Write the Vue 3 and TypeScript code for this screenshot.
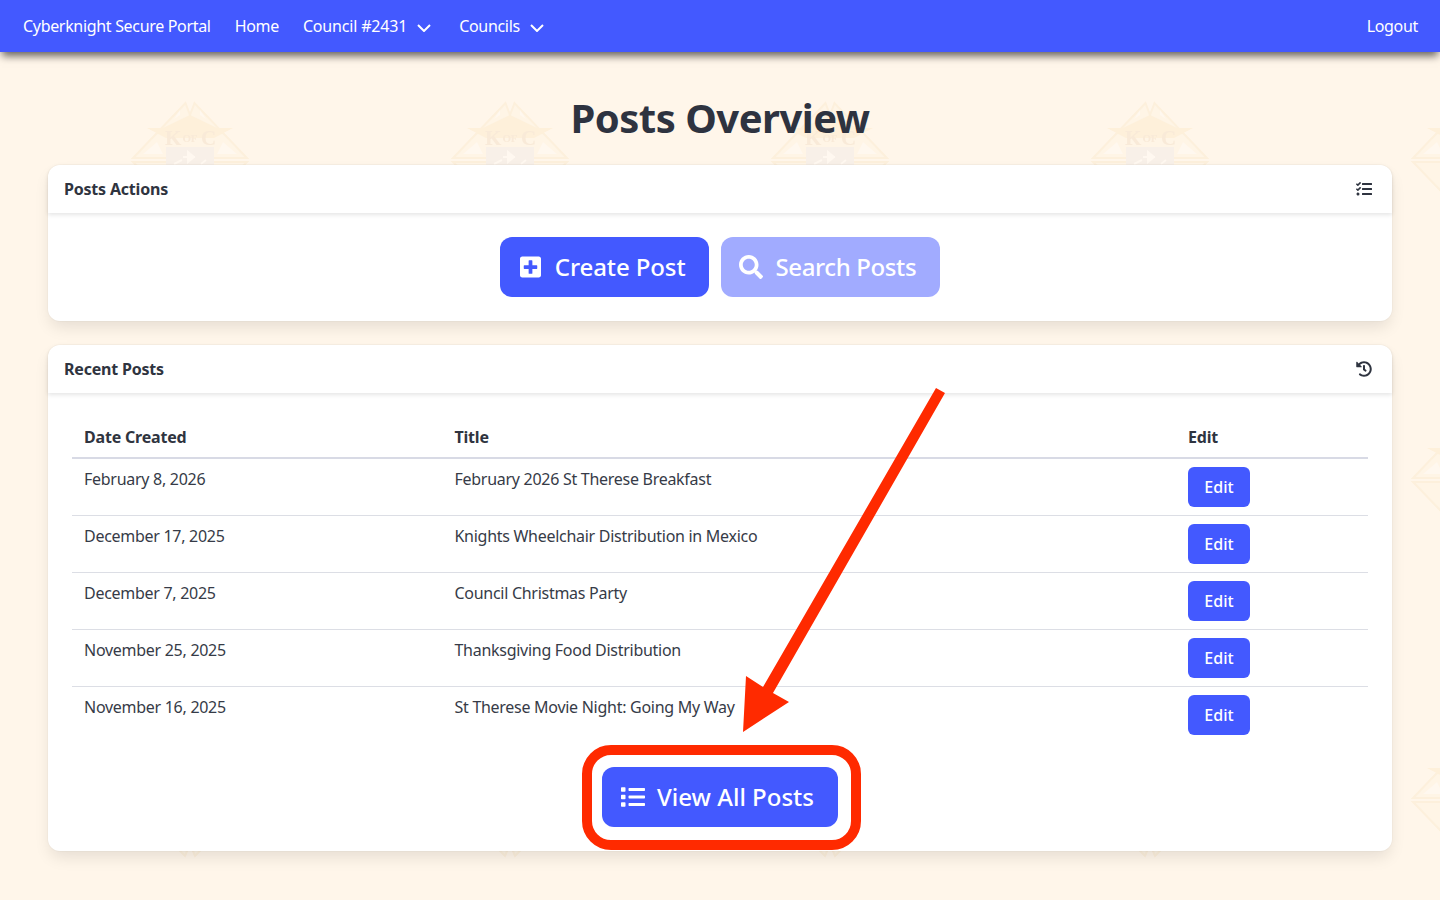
<template>
  <div class="page">
    <svg class="watermark" width="100%" height="100%" aria-hidden="true">
      <defs>
        <pattern id="kofc" x="30" y="92" width="320" height="320" patternUnits="userSpaceOnUse">
          <g transform="translate(160 10)">
            <path class="line" d="M-4.5 1 L-57 56 H57 L4.5 1 L0 13 Z" />
            <path class="line" d="M-57 60 L-5 114 L0 102 L5 114 L57 60 Z" />
            <path class="gold" d="M-43 26 H43 L24 36 H-24 Z" />
            <path class="gold" d="M0 13 L-27 26 H27 Z" />
            <path class="cut" d="M-16 17 L-10 8 V13 Z M16 17 L10 8 V13 Z" />
            <path class="cut" d="M-47 52 L-33 40 L-27 52 Z M47 52 L33 40 L27 52 Z" />
            <rect class="shield" x="-24" y="45" width="48" height="48" />
            <text class="big" x="-25" y="43">K</text>
            <text class="small" x="-7.5" y="40">OF</text>
            <text class="big" x="11" y="43">C</text>
            <path class="blade" d="M-2 50 V60 L4 55 Z M-16 62 L-8 58 M-7 55 H5 M11 62 L16 58" />
          </g>
        </pattern>
      </defs>
      <rect width="100%" height="100%" fill="url(#kofc)" />
    </svg>

    <nav class="navbar">
      <a class="nav-item">Cyberknight Secure Portal</a>
      <a class="nav-item">Home</a>
      <a class="nav-item dropdown council">
        Council #2431
        <svg class="chevron" viewBox="0 0 14 8"><path d="M1 1 L7 7 L13 1" /></svg>
      </a>
      <a class="nav-item dropdown">
        Councils
        <svg class="chevron" viewBox="0 0 14 8"><path d="M1 1 L7 7 L13 1" /></svg>
      </a>
      <a class="nav-item logout">Logout</a>
    </nav>

    <main class="content">
      <h1 class="title">Posts Overview</h1>

      <section class="card">
        <header class="card-header">
          <span>Posts Actions</span>
          <svg class="header-icon" viewBox="0 0 512 512">
            <path d="M139.61 35.5a12 12 0 0 0-17 0L58.93 98.81l-22.7-22.12a12 12 0 0 0-17 0L3.53 92.41a12 12 0 0 0 0 17l47.59 47.4a12.78 12.78 0 0 0 17.61 0l15.59-15.62L156.52 69a12.09 12.09 0 0 0 .09-17zm0 159.19a12 12 0 0 0-17 0l-63.68 63.72-22.7-22.1a12 12 0 0 0-17 0L3.53 252a12 12 0 0 0 0 17L51 316.5a12.77 12.77 0 0 0 17.6 0l15.7-15.69 72.2-72.22a12 12 0 0 0 .09-16.9zM64 368c-26.49 0-48.59 21.5-48.59 48S37.53 464 64 464a48 48 0 0 0 0-96zm432 16H208a16 16 0 0 0-16 16v32a16 16 0 0 0 16 16h288a16 16 0 0 0 16-16v-32a16 16 0 0 0-16-16zm0-320H208a16 16 0 0 0-16 16v32a16 16 0 0 0 16 16h288a16 16 0 0 0 16-16V80a16 16 0 0 0-16-16zm0 160H208a16 16 0 0 0-16 16v32a16 16 0 0 0 16 16h288a16 16 0 0 0 16-16v-32a16 16 0 0 0-16-16z" />
          </svg>
        </header>
        <div class="card-body actions">
          <button class="big-btn create">
            <span class="btn-icon">
              <svg width="21" height="24" viewBox="0 0 448 512">
                <path d="M400 32H48C21.5 32 0 53.5 0 80v352c0 26.5 21.5 48 48 48h352c26.5 0 48-21.5 48-48V80c0-26.5-21.5-48-48-48zm-32 252c0 6.6-5.4 12-12 12h-92v92c0 6.6-5.4 12-12 12h-56c-6.6 0-12-5.4-12-12v-92H92c-6.6 0-12-5.4-12-12v-56c0-6.6 5.4-12 12-12h92v-92c0-6.6 5.4-12 12-12h56c6.6 0 12 5.4 12 12v92h92c6.6 0 12 5.4 12 12v56z" />
              </svg>
            </span>
            Create Post
          </button>
          <button class="big-btn search">
            <span class="btn-icon">
              <svg width="24" height="24" viewBox="0 0 512 512">
                <path d="M505 442.7L405.3 343c-4.5-4.5-10.6-7-17-7H372c27.6-35.3 44-79.7 44-128C416 93.1 322.9 0 208 0S0 93.1 0 208s93.1 208 208 208c48.3 0 92.7-16.4 128-44v16.3c0 6.4 2.5 12.5 7 17l99.7 99.7c9.4 9.4 24.6 9.4 33.9 0l28.3-28.3c9.4-9.4 9.4-24.6.1-34zM208 336c-70.7 0-128-57.2-128-128 0-70.7 57.2-128 128-128 70.7 0 128 57.2 128 128 0 70.7-57.2 128-128 128z" />
              </svg>
            </span>
            Search Posts
          </button>
        </div>
      </section>

      <section class="card">
        <header class="card-header">
          <span>Recent Posts</span>
          <svg class="header-icon" viewBox="0 0 512 512">
            <path d="M504 255.531c.253 136.64-111.18 248.372-247.82 248.468-59.015.042-113.223-20.53-155.822-54.911-11.077-8.94-11.905-25.541-1.839-35.607l11.267-11.267c8.609-8.609 22.353-9.551 31.891-1.984C173.062 425.135 212.781 440 256 440c101.705 0 184-82.311 184-184 0-101.705-82.311-184-184-184-48.814 0-93.149 18.969-126.068 49.932l50.754 50.754c10.08 10.08 2.941 27.314-11.313 27.314H24c-8.837 0-16-7.163-16-16V38.627c0-14.254 17.234-21.393 27.314-11.314l49.372 49.372C129.209 34.136 189.552 8 256 8c136.81 0 247.747 110.78 248 247.531zm-180.912 78.784l9.823-12.63c8.138-10.463 6.253-25.542-4.21-33.679L288 256.349V152c0-13.255-10.745-24-24-24h-16c-13.255 0-24 10.745-24 24v135.651l65.409 50.874c10.463 8.137 25.541 6.253 33.679-4.21z" />
          </svg>
        </header>
        <div class="card-body">
          <table class="posts">
            <colgroup>
              <col class="col-date" />
              <col />
              <col class="col-edit" />
            </colgroup>
            <thead>
              <tr>
                <th>Date Created</th>
                <th>Title</th>
                <th>Edit</th>
              </tr>
            </thead>
            <tbody>
              <tr v-for="post in posts" :key="post.title">
                <td>{{ post.date }}</td>
                <td>{{ post.title }}</td>
                <td><button class="edit-btn">Edit</button></td>
              </tr>
            </tbody>
          </table>
          <div class="view-all">
            <button class="big-btn all">
              <span class="btn-icon">
                <svg width="24" height="24" viewBox="0 0 512 512">
                  <path d="M80 368H16a16 16 0 0 0-16 16v64a16 16 0 0 0 16 16h64a16 16 0 0 0 16-16v-64a16 16 0 0 0-16-16zm0-320H16A16 16 0 0 0 0 64v64a16 16 0 0 0 16 16h64a16 16 0 0 0 16-16V64a16 16 0 0 0-16-16zm0 160H16a16 16 0 0 0-16 16v64a16 16 0 0 0 16 16h64a16 16 0 0 0 16-16v-64a16 16 0 0 0-16-16zm416 176H176a16 16 0 0 0-16 16v32a16 16 0 0 0 16 16h320a16 16 0 0 0 16-16v-32a16 16 0 0 0-16-16zm0-320H176a16 16 0 0 0-16 16v32a16 16 0 0 0 16 16h320a16 16 0 0 0 16-16V80a16 16 0 0 0-16-16zm0 160H176a16 16 0 0 0-16 16v32a16 16 0 0 0 16 16h320a16 16 0 0 0 16-16v-32a16 16 0 0 0-16-16z" />
                </svg>
              </span>
              View All Posts
            </button>
          </div>
        </div>
      </section>
    </main>

    <!-- tutorial callout drawn over the page -->
    <svg class="callout" width="1440" height="900" viewBox="0 0 1440 900" aria-hidden="true">
      <path class="arrow" d="M936 388 L945 393 L773 693 L789 702 L743 732 L746 676 L763 687 Z" />
      <rect class="ring" x="587" y="750" width="269" height="95" rx="24" />
    </svg>
  </div>
</template>

<script setup lang="ts">
interface Post {
  date: string;
  title: string;
}

const posts: Post[] = [
  { date: "February 8, 2026", title: "February 2026 St Therese Breakfast" },
  { date: "December 17, 2025", title: "Knights Wheelchair Distribution in Mexico" },
  { date: "December 7, 2025", title: "Council Christmas Party" },
  { date: "November 25, 2025", title: "Thanksgiving Food Distribution" },
  { date: "November 16, 2025", title: "St Therese Movie Night: Going My Way" },
];
</script>

<style>
html,
body {
  margin: 0;
  background: #fff6ea;
}
</style>

<style scoped>
.page {
  position: relative;
  min-height: 900px;
  overflow: hidden;
  font-family: "Noto Sans", sans-serif;
  font-size: 16px;
  letter-spacing: -0.2px;
  color: #2f3440;
}

.watermark {
  position: absolute;
  inset: 0;
}

.line {
  fill: #fff5e6;
  stroke: #fdf0dc;
  stroke-width: 2;
}

.gold {
  fill: #fef0da;
}

.cut {
  fill: #fff8ef;
}

.shield {
  fill: #f8f0e8;
}

.big {
  font: bold 21px "Liberation Serif", serif;
  fill: #f9ead8;
}

.small {
  font: bold 11px "Liberation Serif", serif;
  fill: #f9ead8;
}

.blade {
  fill: #fff8f0;
  stroke: #fff8f0;
  stroke-width: 2;
}

.navbar {
  position: relative;
  display: flex;
  align-items: center;
  height: 52px;
  padding: 0 10px 0 11px;
  background: #4359ff;
  color: #fff;
  letter-spacing: -0.32px;
  box-shadow: 0 6px 8px -2px rgba(0, 0, 0, 0.6);
}

.nav-item {
  display: flex;
  align-items: center;
  gap: 10px;
  padding: 0 12px;
}

.dropdown {
  padding-right: 16px;
}

.council {
  letter-spacing: -0.18px;
}

.logout {
  margin-left: auto;
}

.chevron {
  width: 14px;
  height: 8px;
  margin-top: 3px;
  fill: none;
  stroke: #fff;
  stroke-width: 2;
}

.content {
  position: relative;
  display: flex;
  flex-direction: column;
  gap: 24px;
  padding: 43px 48px 48px;
}

.title {
  margin: 0 0 1px;
  text-align: center;
  font-size: 40px;
  line-height: 45px;
  font-weight: 700;
  letter-spacing: -0.5px;
  color: #2e3340;
}

.card {
  background: #fff;
  border-radius: 12px;
  box-shadow: 0 8px 16px -2px rgba(10, 10, 10, 0.1), 0 0 0 1px rgba(10, 10, 10, 0.02);
}

.card-header {
  display: flex;
  align-items: center;
  justify-content: space-between;
  height: 48px;
  padding: 0 20px 0 16px;
  border-radius: 12px 12px 0 0;
  font-weight: 700;
  box-shadow: 0 2px 4px rgba(10, 10, 10, 0.1);
}

.header-icon {
  width: 16px;
  height: 16px;
  fill: #2f3440;
}

.card-body {
  padding: 24px;
}

.actions {
  display: flex;
  justify-content: center;
  gap: 12px;
}

.big-btn {
  display: inline-flex;
  align-items: center;
  height: 60px;
  padding: 0 24px 2px 13px;
  border: 0;
  border-radius: 12px;
  background: #4359ff;
  color: #fff;
  font-family: inherit;
  font-size: 24px;
  font-weight: 500;
}

.create {
  letter-spacing: -0.1px;
}

.search {
  padding-left: 12px;
  background: #a1abff;
  letter-spacing: -0.38px;
}

.all {
  letter-spacing: 0;
}

.btn-icon {
  display: flex;
  align-items: center;
  justify-content: center;
  width: 36px;
  margin: 2px 6px 0 0;
}

.btn-icon svg {
  fill: #fff;
}

.posts {
  width: 100%;
  table-layout: fixed;
  border-collapse: collapse;
}

.col-date {
  width: 370.5px;
}

.col-edit {
  width: 192px;
}

.posts th {
  height: 40px;
  padding: 8px 12px;
  box-sizing: border-box;
  text-align: left;
  font-weight: 700;
  line-height: 24px;
  border-bottom: 2px solid #d8dae5;
}

.posts td {
  padding: 8px 12px;
  vertical-align: top;
  line-height: 24px;
  letter-spacing: -0.28px;
  color: #363b47;
  border-bottom: 1px solid #dcdee5;
}

.posts tbody tr:last-child td {
  border-bottom: 0;
}

.edit-btn {
  display: block;
  width: 62px;
  height: 40px;
  border: 0;
  border-radius: 6px;
  background: #4359ff;
  color: #fff;
  font-family: inherit;
  font-size: 16px;
  font-weight: 500;
  letter-spacing: 0;
}

.view-all {
  display: flex;
  justify-content: center;
  margin-top: 24px;
}

.callout {
  position: absolute;
  top: 0;
  left: 0;
  pointer-events: none;
}

.arrow {
  fill: #ff2a00;
}

.ring {
  fill: none;
  stroke: #ff2a00;
  stroke-width: 10;
}
</style>
